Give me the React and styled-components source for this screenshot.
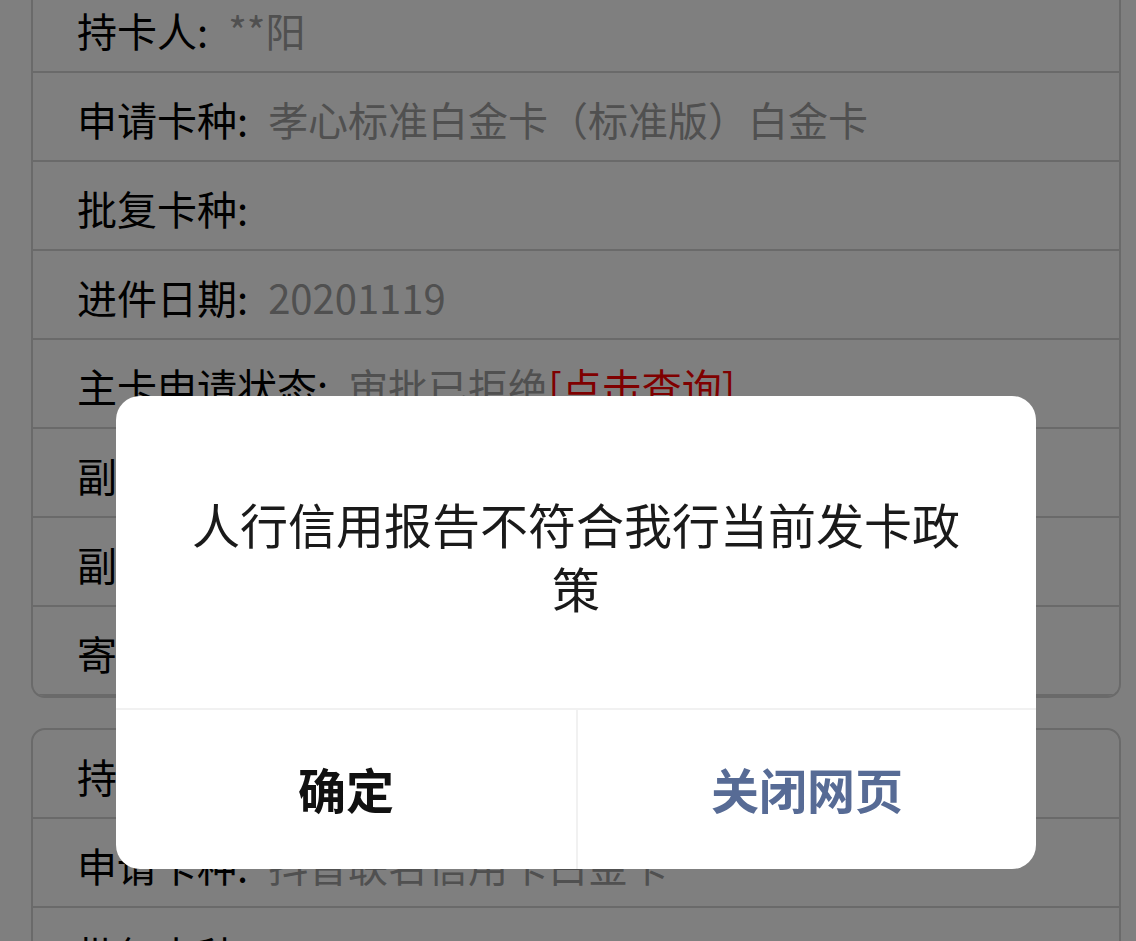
import React from 'react'
import styled, { createGlobalStyle } from 'styled-components'

const Global = createGlobalStyle`
  html, body {
    margin: 0;
    padding: 0;
    background: #fff;
    overflow: hidden;
  }
  body {
    font-family: "Noto Sans CJK SC", "Noto Sans", sans-serif;
  }
`

const Page = styled.div`
  width: 1136px;
  height: 941px;
  overflow: hidden;
  box-sizing: border-box;
  padding: 0 15px 0 31px;
  display: flex;
  flex-direction: column;
  gap: 30px;
`

const Card = styled.section`
  border: 2px solid #d4d4d4;
  border-radius: 14px;
  background: #fff;
  overflow: hidden;
  flex-shrink: 0;
  &:first-child {
    margin-top: -16px;
    border-top: none;
    border-radius: 0 0 14px 14px;
  }
`

const Row = styled.div`
  height: 89px;
  border-bottom: 2px solid #d4d4d4;
  display: flex;
  align-items: center;
  padding: 4px 0 0 44px;
  box-sizing: border-box;
  font-size: 40px;
  white-space: nowrap;
`

const Label = styled.span`
  color: #000;
`

const Value = styled.span`
  color: #a0a0a0;
  margin-left: 20px;
`

const Link = styled.span`
  color: #ff0000;
`

const Mask = styled.div`
  position: fixed;
  inset: 0;
  background: rgba(0, 0, 0, 0.5);
`

const Dialog = styled.div`
  position: fixed;
  left: 116px;
  top: 396px;
  width: 920px;
  height: 473px;
  background: #fff;
  border-radius: 24px;
  overflow: hidden;
  display: flex;
  flex-direction: column;
`

const Message = styled.div`
  flex: 1;
  display: flex;
  align-items: center;
  justify-content: center;
  padding: 6px 60px 0;
  font-size: 48px;
  line-height: 64px;
  color: #1a1a1a;
  text-align: center;
`

const MessageText = styled.p`
  margin: 0;
`

const Actions = styled.div`
  height: 159px;
  border-top: 2px solid #f1f1f1;
  display: grid;
  grid-template-columns: 1fr 1fr;
`

const Action = styled.button`
  border: none;
  background: none;
  padding: 0 0 4px;
  font-family: inherit;
  font-size: 48px;
  font-weight: 700;
  color: ${(p) => (p.primary ? '#576b95' : '#111')};
  & + & {
    border-left: 2px solid #f1f1f1;
  }
`

const first = [
  { label: '持卡人:', value: '**阳' },
  { label: '申请卡种:', value: '孝心标准白金卡（标准版）白金卡' },
  { label: '批复卡种:', value: '' },
  { label: '进件日期:', value: '20201119' },
  { label: '主卡申请状态:', value: '审批已拒绝', link: '[点击查询]' },
  { label: '副卡申请人:', value: '' },
  { label: '副卡申请状态:', value: '' },
  { label: '寄送方式:', value: '' },
]

const second = [
  { label: '持卡人:', value: '**阳' },
  { label: '申请卡种:', value: '抖音联名信用卡白金卡' },
  { label: '批复卡种:', value: '' },
]

const InfoCard = ({ rows }) => (
  <Card>
    {rows.map((r, i) => (
      <Row key={i}>
        <Label>{r.label}</Label>
        {(r.value || r.link) && (
          <Value>
            {r.value}
            {r.link && <Link>{r.link}</Link>}
          </Value>
        )}
      </Row>
    ))}
  </Card>
)

export default function App() {
  return (
    <>
      <Global />
      <Page>
        <InfoCard rows={first} />
        <InfoCard rows={second} />
      </Page>
      <Mask />
      <Dialog>
        <Message>
          <MessageText>人行信用报告不符合我行当前发卡政策</MessageText>
        </Message>
        <Actions>
          <Action>确定</Action>
          <Action primary>关闭网页</Action>
        </Actions>
      </Dialog>
    </>
  )
}
